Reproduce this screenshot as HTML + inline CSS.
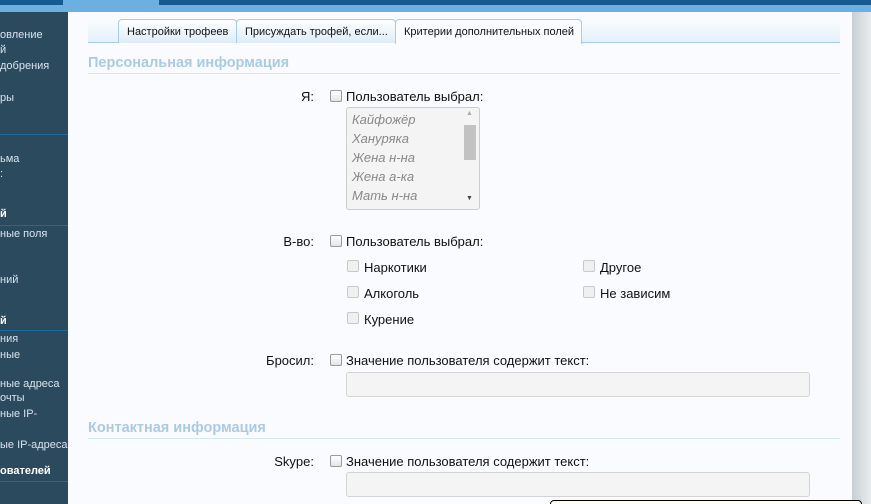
<!DOCTYPE html>
<html><head><meta charset="utf-8"><style>
*{margin:0;padding:0;box-sizing:border-box}
html,body{width:871px;height:504px;overflow:hidden}
body{background:#fafbfe;font-family:"Liberation Sans","DejaVu Sans",sans-serif;font-size:13px;color:#111;position:relative}
.a{position:absolute;white-space:nowrap}
.side{position:absolute;left:0;top:12px;width:68px;height:492px;background:#2b4a5e;overflow:hidden}
.side .a{color:#d8e4ee;font-size:11px;left:0}
.side .b{font-weight:bold;color:#fff}
.sl{position:absolute;left:0;width:68px;height:1px;background:#1e6aa0}
.cb{position:absolute;width:12px;height:12px;border:1px solid #9a9a9a;border-radius:2px;background:linear-gradient(#fff,#e4e4e4)}
.cb.d{border-color:#c8c8c8;background:#f0f0f0}
.h{position:absolute;left:88px;font-weight:bold;font-size:14.5px;color:#a9cbe6}
.hl{position:absolute;left:88px;width:752px;height:1px;background:#d6e8f6}
.lbl{position:absolute;right:557px;text-align:right}
.inp{position:absolute;left:346px;width:464px;height:25px;border:1px solid #d4d4d4;border-radius:3px;background:#f4f4f4}
.tab{position:absolute;top:19px;height:24px;border:1px solid #a9cbe6;border-bottom:none;border-radius:4px 4px 0 0;background:linear-gradient(#fff,#dcecf8);font-size:11px;padding:6px 0 0 8px;color:#111}
.it{position:absolute;left:352px;font-style:italic;color:#888}
</style></head><body>
<div class="a" style="left:0;top:0;width:871px;height:5px;background:#175a8f"></div>
<div class="a" style="left:0;top:5px;width:871px;height:7px;background:#6cb0e2"></div>
<div class="a" style="left:63px;top:0;width:96px;height:12px;background:#6cb0e2"></div>
<div class="a" style="left:852px;top:12px;width:19px;height:492px;background:linear-gradient(90deg,#c8d0d6,#e8ecef)"></div>
<div class="side">
<div class="a" style="top:17px">овление</div>
<div class="a" style="top:32px">й</div>
<div class="a" style="top:48px">добрения</div>
<div class="a" style="top:80px">ры</div>
<div class="sl" style="top:122px"></div>
<div class="a" style="top:141px">ьма</div>
<div class="a" style="top:156px">:</div>
<div class="a b" style="top:196px">й</div>
<div class="sl" style="top:213px"></div>
<div class="a" style="top:216px">ные поля</div>
<div class="a" style="top:262px">ний</div>
<div class="a b" style="top:303px">й</div>
<div class="sl" style="top:318px"></div>
<div class="a" style="top:321px">ния</div>
<div class="a" style="top:337px">ные</div>
<div class="a" style="top:366px">ные адреса</div>
<div class="a" style="top:380px">очты</div>
<div class="a" style="top:396px">ные IP-</div>
<div class="a" style="top:427px">ые IP-адреса</div>
<div class="a b" style="top:453px">ователей</div>
<div class="sl" style="top:469px"></div>
</div>
<div class="a" style="left:88px;top:19px;width:752px;height:24px;background:linear-gradient(#fafcfe,#e4f0fa)"></div>
<div class="a" style="left:88px;top:42px;width:752px;height:1px;background:#a9cbe6"></div>
<div class="tab" style="left:118px;width:119px">Настройки трофеев</div>
<div class="tab" style="left:236px;width:160px">Присуждать трофей, если...</div>
<div class="tab" style="left:395px;width:187px;height:25px;background:#fafbfe">Критерии дополнительных полей</div>
<div class="h" style="top:55px">Персональная информация</div>
<div class="hl" style="top:73px"></div>
<div class="lbl" style="top:89px">Я:</div>
<div class="cb" style="left:330px;top:90px"></div>
<div class="a" style="left:346px;top:89px">Пользователь выбрал:</div>
<div class="a" style="left:346px;top:107px;width:134px;height:103px;border:1px solid #ccc;border-radius:3px;background:#f4f4f4"></div>
<div class="a" style="left:464px;top:125px;width:12px;height:35px;background:#c2c2c2"></div>
<div class="a" style="left:466px;top:110px;font-size:7px;color:#aaa">▲</div>
<div class="a" style="left:466px;top:195px;font-size:7px;color:#444">▼</div>
<div class="it" style="top:112px">Кайфожёр</div>
<div class="it" style="top:131px">Ханурякa</div>
<div class="it" style="top:150px">Жена н-на</div>
<div class="it" style="top:169px">Жена а-ка</div>
<div class="it" style="top:188px">Мать н-на</div>
<div class="lbl" style="top:234px">В-во:</div>
<div class="cb" style="left:330px;top:235px"></div>
<div class="a" style="left:346px;top:234px">Пользователь выбрал:</div>
<div class="cb d" style="left:347px;top:260px"></div><div class="a" style="left:364px;top:260px">Наркотики</div>
<div class="cb d" style="left:583px;top:260px"></div><div class="a" style="left:600px;top:260px">Другое</div>
<div class="cb d" style="left:347px;top:286px"></div><div class="a" style="left:364px;top:286px">Алкоголь</div>
<div class="cb d" style="left:583px;top:286px"></div><div class="a" style="left:600px;top:286px">Не зависим</div>
<div class="cb d" style="left:347px;top:312px"></div><div class="a" style="left:364px;top:312px">Курение</div>
<div class="lbl" style="top:353px">Бросил:</div>
<div class="cb" style="left:330px;top:354px"></div>
<div class="a" style="left:346px;top:353px">Значение пользователя содержит текст:</div>
<div class="inp" style="top:372px"></div>
<div class="h" style="top:420px">Контактная информация</div>
<div class="hl" style="top:438px"></div>
<div class="lbl" style="top:454px">Skype:</div>
<div class="cb" style="left:330px;top:455px"></div>
<div class="a" style="left:346px;top:454px">Значение пользователя содержит текст:</div>
<div class="inp" style="top:472px"></div>
<div class="a" style="left:550px;top:500px;width:312px;height:20px;border:1px solid #000;border-radius:4px;background:#fffff0"></div>
</body></html>
